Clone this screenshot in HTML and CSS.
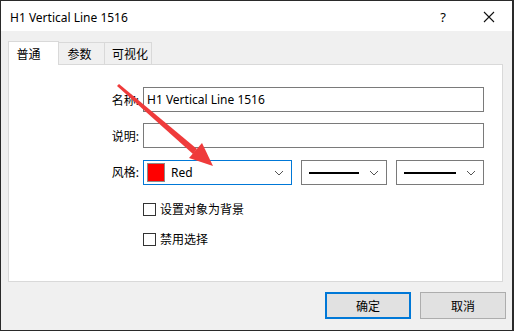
FILE: index.html
```html
<!DOCTYPE html>
<html>
  <head>
    <title>H1 Vertical Line 1516</title>
    <link rel="stylesheet" href="styles.css">
  </head>
  <body>
    <div class="window">
      <div class="titlebar">
        <span class="title">H1 Vertical Line 1516</span>
        <span class="help">?</span>
        <svg class="close" width="12" height="12" viewBox="0 0 12 12">
          <path d="M1 1 L11 11 M11 1 L1 11" stroke="#111" stroke-width="1.1" fill="none"/>
        </svg>
      </div>

      <div class="tabs">
        <div class="tab active">普通</div>
        <div class="tab">参数</div>
        <div class="tab">可视化</div>
      </div>

      <div class="panel">
        <div class="form">
          <label class="label">名称:</label>
          <div class="field">H1 Vertical Line 1516</div>

          <label class="label">说明:</label>
          <div class="field"></div>

          <label class="label">风格:</label>
          <div class="style-row">
            <div class="select color-select">
              <span class="swatch"></span>
              <span class="select-text">Red</span>
              <svg class="chevron" width="10" height="6" viewBox="0 0 10 6"><path d="M1 1 L5 5 L9 1" stroke="#555" fill="none"/></svg>
            </div>
            <div class="select line-select">
              <span class="line-sample"></span>
              <svg class="chevron" width="10" height="6" viewBox="0 0 10 6"><path d="M1 1 L5 5 L9 1" stroke="#555" fill="none"/></svg>
            </div>
            <div class="select line-select">
              <span class="line-sample"></span>
              <svg class="chevron" width="10" height="6" viewBox="0 0 10 6"><path d="M1 1 L5 5 L9 1" stroke="#555" fill="none"/></svg>
            </div>
          </div>
        </div>

        <div class="checks">
          <div class="check"><span class="box"></span>设置对象为背景</div>
          <div class="check"><span class="box"></span>禁用选择</div>
        </div>
      </div>

      <div class="buttons">
        <button class="btn default">确定</button>
        <button class="btn">取消</button>
      </div>

      <!-- annotation arrow drawn over the dialog -->
      <svg class="arrow" width="514" height="331" viewBox="0 0 514 331">
        <path d="M117 86 L119 84 L197 149 L193 154 Z" fill="#ef3b3b"/>
        <path d="M213 166 L189 158 L202 143 Z" fill="#ef3b3b"/>
      </svg>
    </div>
  </body>
</html>
```

FILE: styles.css
```css
body {
  margin: 0;
  padding: 0;
  background: #1e1e1e;
  font-family: "Noto Sans", "Noto Sans CJK SC", sans-serif;
  font-size: 12px;
  color: #000;
}

.window {
  position: relative;
  width: 514px;
  height: 331px;
  box-sizing: border-box;
  border: 1px solid #2a2a2a;
  border-right-width: 2px;
  background: #f0f0f0;
  overflow: hidden;
}

.titlebar {
  height: 30px;
  background: #fff;
  display: flex;
  align-items: center;
  padding-left: 9px;
}

.title {
  flex: 1;
  font-size: 12px;
  padding-top: 2px;
}

.help {
  font-size: 13px;
  margin-right: 37px;
  padding-top: 1px;
}

.close {
  margin-right: 17px;
  margin-top: 1px;
}

.tabs {
  display: flex;
  align-items: flex-end;
  height: 23px;
  margin-top: 10px;
  padding-left: 7px;
}

.tab {
  height: 22px;
  box-sizing: border-box;
  padding: 0 8px 0 4px;
  border: 1px solid #d9d9d9;
  border-bottom: none;
  border-left: none;
  background: #f0f0f0;
  display: flex;
  align-items: center;
  justify-content: center;
  width: 46px;
}

.tab.active {
  height: 24px;
  width: 51px;
  background: #fff;
  border-left: 1px solid #d9d9d9;
  padding: 0 10px 0 0;
  margin-bottom: -1px;
  position: relative;
  z-index: 1;
}

.tab:last-child {
  width: 47px;
  padding: 0 0 0 4px;
}

.panel {
  margin: 0 9px 0 7px;
  height: 218px;
  box-sizing: border-box;
  background: #fff;
  border: 1px solid #d9d9d9;
}

.form {
  display: grid;
  grid-template-columns: 130px 341px;
  column-gap: 4px;
  row-gap: 11px;
  padding-top: 22px;
}

.label {
  text-align: right;
  align-self: center;
  font-size: 12px;
}

.field {
  height: 25px;
  box-sizing: border-box;
  border: 1px solid #7a7a7a;
  padding: 0 3px;
  display: flex;
  align-items: center;
}

.style-row {
  display: flex;
  gap: 9px;
  margin-top: 1px;
}

.select {
  height: 25px;
  box-sizing: border-box;
  border: 1px solid #7a7a7a;
  display: flex;
  align-items: center;
  padding-right: 7px;
}

.color-select {
  width: 149px;
  border-color: #0078d7;
  padding-left: 3px;
}

.swatch {
  width: 16px;
  height: 17px;
  background: #ff0000;
  border: 1px solid #8c8c8c;
}

.select-text {
  flex: 1;
  margin-left: 6px;
}

.line-select {
  width: 87px;
  padding-left: 7px;
}

.line-select:last-child {
  width: 88px;
}

.line-sample {
  flex: 1;
  height: 2px;
  background: #000;
  margin-right: 10px;
}

.checks {
  padding-left: 134px;
  padding-top: 14px;
  display: flex;
  flex-direction: column;
  gap: 10px;
}

.check {
  display: flex;
  align-items: center;
  height: 20px;
}

.box {
  width: 13px;
  height: 13px;
  box-sizing: border-box;
  border: 1px solid #333;
  background: #fff;
  margin-right: 4px;
}

.buttons {
  display: flex;
  justify-content: flex-end;
  gap: 9px;
  margin-top: 10px;
  padding-right: 6px;
}

.btn {
  width: 86px;
  height: 27px;
  box-sizing: border-box;
  background: #e1e1e1;
  border: 1px solid #adadad;
  font-family: "Noto Sans CJK SC", sans-serif;
  font-size: 12px;
  color: #000;
  padding: 0;
}

.btn.default {
  border: 2px solid #0078d7;
}

.arrow {
  position: absolute;
  left: -1px;
  top: -1px;
  pointer-events: none;
}
```
